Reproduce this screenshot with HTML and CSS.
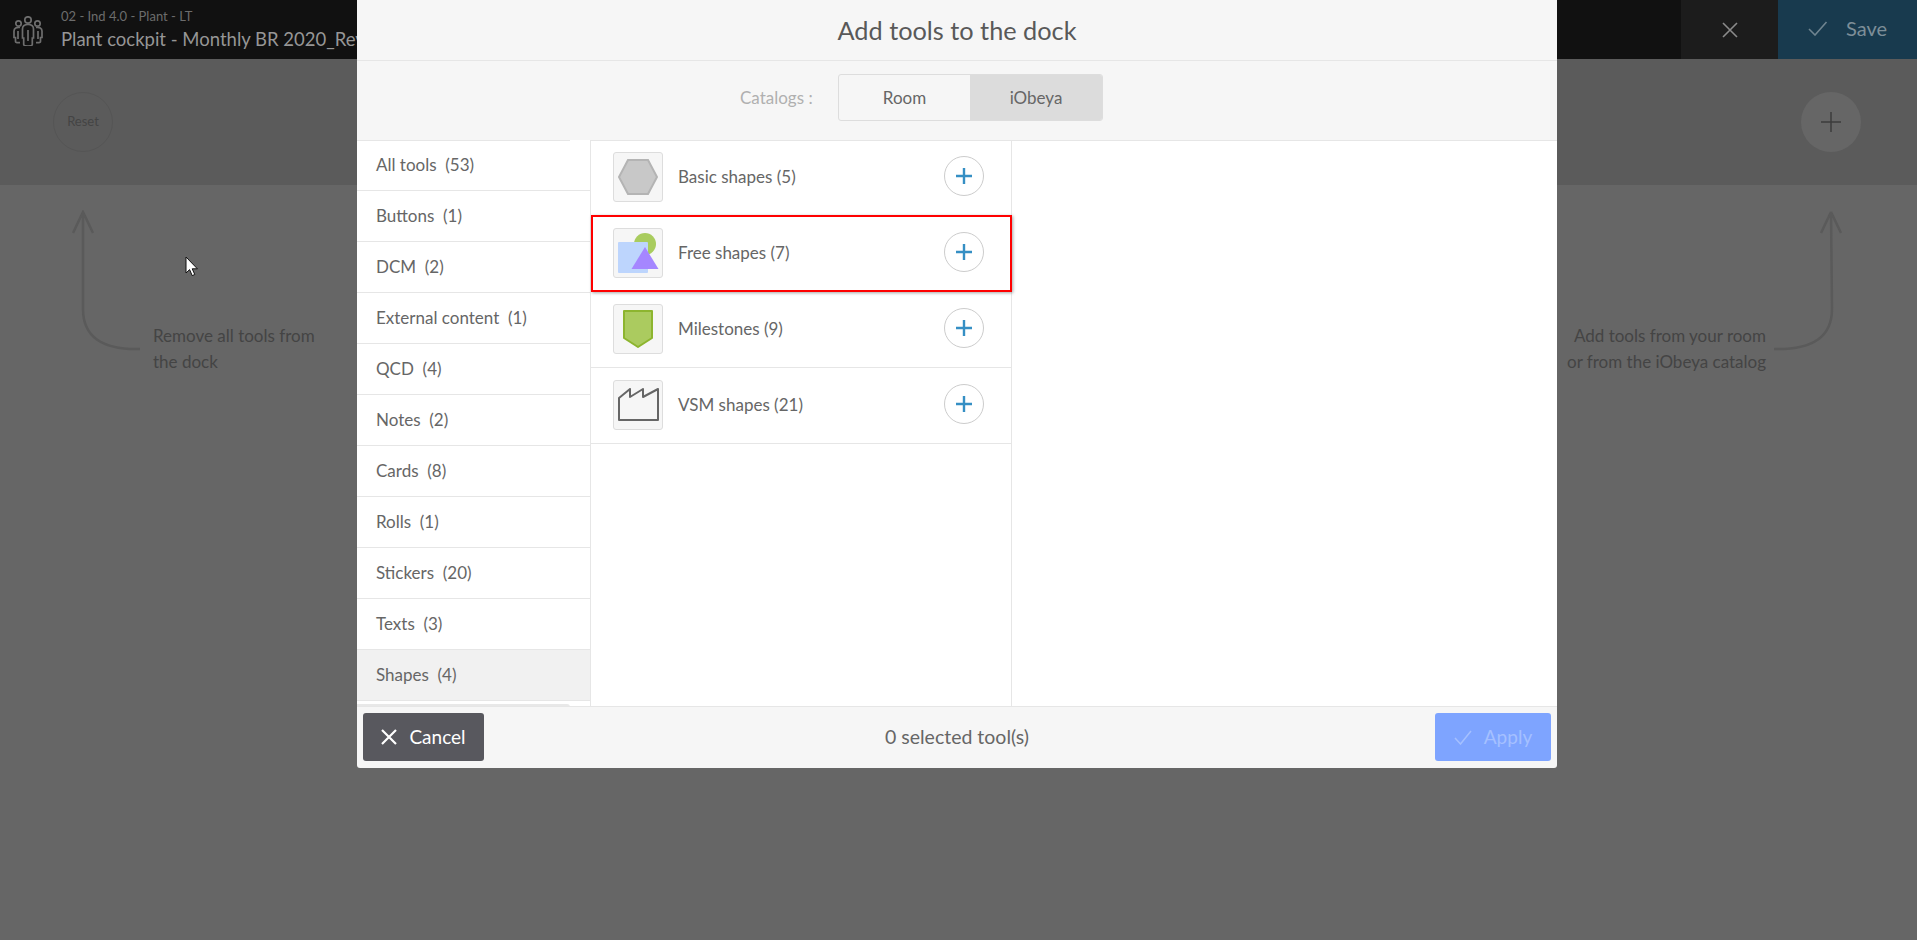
FILE: index.html
```html
<!DOCTYPE html>
<html lang="en">
<head>
<meta charset="utf-8">
<title>Add tools to the dock</title>
<link rel="stylesheet" href="styles.css">
</head>
<body>
<header class="topbar">
  <svg class="room-icon" viewBox="0 0 30 30" fill="none" stroke="#6e6e6e" stroke-width="1.700">
    <circle cx="15" cy="4" r="3.200"/><circle cx="5.500" cy="7.500" r="2.700"/><circle cx="24.500" cy="7.500" r="2.700"/>
    <path d="M9.500 13c0-3 2-4.500 5.500-4.500s5.500 1.500 5.500 4.500v9h-1.200v6.500c0 1-1 1.500-4.300 1.500s-4.300-.5-4.300-1.500V22H9.500z"/>
    <path d="M7 11.500c-3.500-.5-6 .5-6 3.500v6.500h1.500v4c0 .8 1 1.200 3 1.200h1.500"/>
    <path d="M23 11.500c3.500-.5 6 .5 6 3.500v6.500h-1.500v4c0 .8-1 1.200-3 1.200H23"/>
    <path d="M15 14v11M5 15v8M25 15v8"/>
  </svg>
  <div class="room-text">
    <div class="room-path">02 - Ind 4.0 - Plant - LT</div>
    <div class="room-title">Plant cockpit - Monthly BR 2020_Review</div>
  </div>
  <button class="top-close"><svg width="16" height="16" viewBox="0 0 16 16" stroke="#8a8a8a" stroke-width="1.600" fill="none"><path d="M1 1l14 14M15 1L1 15"/></svg></button>
  <button class="top-save"><svg width="20" height="15" viewBox="0 0 20 15" stroke="#6f8490" stroke-width="1.600" fill="none"><path d="M1 8l6 6L18.500 1"/></svg><span>Save</span></button>
</header>

<section class="dock">
  <div class="reset">Reset</div>
  <div class="add-circle"><svg width="20" height="20" viewBox="0 0 20 20" stroke="#3c3c3c" stroke-width="1.500" fill="none"><path d="M10 0v20M0 10h20"/></svg></div>
</section>

<section class="hints">
  <div class="hint hint-left">
    <svg class="arrow" width="68" height="142" viewBox="0 0 68 142" fill="none" stroke="#5a5a5a" stroke-width="2.500"><path d="M1 23L11 2l10 21M11 2v97c0 27 18 41 57 40"/></svg>
    <p class="hint-text">Remove all tools from<br>the dock</p>
  </div>
  <div class="hint hint-right">
    <p class="hint-text align-right">Add tools from your room<br>or from the iObeya catalog</p>
    <svg class="arrow" width="68" height="142" viewBox="0 0 68 142" fill="none" stroke="#5a5a5a" stroke-width="2.500"><path d="M47 23L57 2l1 97c0 27-18 41-58 40M57 2l10 21"/></svg>
  </div>
</section>

<svg class="cursor" width="14" height="20" viewBox="0 0 14 20"><path d="M1 1v16l3.600-3.400 2.600 6 2.600-1.100-2.600-5.700h5.200z" fill="#fff" stroke="#111" stroke-width="1"/></svg>

<div class="modal">
  <h1 class="modal-title">Add tools to the dock</h1>
  <div class="catalog-bar">
    <span class="catalog-label">Catalogs :</span>
    <div class="toggle">
      <span class="toggle-item">Room</span>
      <span class="toggle-item on">iObeya</span>
    </div>
  </div>
  <div class="modal-body">
    <nav class="sidebar">
      <div class="cat">All tools&nbsp; (53)</div>
      <div class="cat">Buttons&nbsp; (1)</div>
      <div class="cat">DCM&nbsp; (2)</div>
      <div class="cat">External content&nbsp; (1)</div>
      <div class="cat">QCD&nbsp; (4)</div>
      <div class="cat">Notes&nbsp; (2)</div>
      <div class="cat">Cards&nbsp; (8)</div>
      <div class="cat">Rolls&nbsp; (1)</div>
      <div class="cat">Stickers&nbsp; (20)</div>
      <div class="cat">Texts&nbsp; (3)</div>
      <div class="cat active">Shapes&nbsp; (4)</div>
      <div class="scroll-edge"></div>
    </nav>
    <div class="tools">
      <div class="tool">
        <span class="tool-icon"><svg width="42" height="38" viewBox="0 0 42 38"><path d="M11 2h20l9 17-9 17H11L2 19z" fill="#c8c8c8" stroke="#b4b4b4" stroke-width="2"/></svg></span>
        <span class="tool-name">Basic shapes (5)</span>
        <span class="plus"><svg width="16" height="16" viewBox="0 0 16 16" stroke="#358fc4" stroke-width="2.400" fill="none"><path d="M8 0v16M0 8h16"/></svg></span>
      </div>
      <div class="tool">
        <span class="tool-icon"><svg width="42" height="42" viewBox="0 0 42 42"><circle cx="28" cy="12" r="11" fill="#a9cc5e"/><rect x="1" y="10" width="30" height="31" rx="1" fill="#bdd5fd"/><path d="M28 15l13.500 22h-27z" fill="#a586ff"/></svg></span>
        <span class="tool-name">Free shapes (7)</span>
        <span class="plus"><svg width="16" height="16" viewBox="0 0 16 16" stroke="#358fc4" stroke-width="2.400" fill="none"><path d="M8 0v16M0 8h16"/></svg></span>
      </div>
      <div class="tool">
        <span class="tool-icon"><svg width="32" height="40" viewBox="0 0 32 40"><path d="M2 2h28v27L16 38 2 29z" fill="#abcb5f" stroke="#8db52f" stroke-width="2" stroke-linejoin="round"/></svg></span>
        <span class="tool-name">Milestones (9)</span>
        <span class="plus"><svg width="16" height="16" viewBox="0 0 16 16" stroke="#358fc4" stroke-width="2.400" fill="none"><path d="M8 0v16M0 8h16"/></svg></span>
      </div>
      <div class="tool">
        <span class="tool-icon"><svg width="42" height="34" viewBox="0 0 42 34"><path d="M2 32V10L13 1v8L26 1v8L41 1v31z" fill="none" stroke="#666" stroke-width="2" stroke-linejoin="round"/></svg></span>
        <span class="tool-name">VSM shapes (21)</span>
        <span class="plus"><svg width="16" height="16" viewBox="0 0 16 16" stroke="#358fc4" stroke-width="2.400" fill="none"><path d="M8 0v16M0 8h16"/></svg></span>
      </div>
    </div>
    <div class="details"></div>
  </div>
  <footer class="modal-footer">
    <button class="btn btn-cancel"><svg width="16" height="16" viewBox="0 0 16 16" stroke="#fff" stroke-width="2.200" fill="none"><path d="M1 1l14 14M15 1L1 15"/></svg><span class="btn-label">Cancel</span></button>
    <span class="selected">0 selected tool(s)</span>
    <button class="btn btn-apply"><svg width="18" height="15" viewBox="0 0 18 15" stroke="#a5c0ff" stroke-width="1.500" fill="none"><path d="M1 8l5.500 6L17 1"/></svg><span class="btn-label">Apply</span></button>
  </footer>
  <div class="highlight"></div>
</div>
</body>
</html>
```
FILE: styles.css
```css
* { box-sizing: border-box; }
html, body { height: 100%; }
body {
  margin: 0;
  background: #666;
  font-family: "Lato", "Noto Sans", sans-serif;
  color: #444;
  overflow: hidden;
  position: relative;
}
button { font: inherit; border: 0; padding: 0; }

.topbar {
  height: 59px;
  background: #111;
  display: flex;
  align-items: stretch;
}
.room-icon { width: 30px; height: 30px; margin: 16px 18px 0 13px; flex: none; }
.room-text { flex: 1; padding-top: 8px; }
.room-path { font-size: 13px; line-height: 17px; color: #6c6c6c; }
.room-title { font-size: 18.500px; line-height: 24px; margin-top: 2px; color: #969696; }
.top-close {
  width: 97px; background: #1c1c1c;
  display: flex; align-items: center; justify-content: center;
}
.top-save {
  width: 139px; background: #183a4e; color: #7d8e98;
  display: flex; align-items: center; justify-content: center; gap: 18px;
  font-size: 20px;
  padding-bottom: 3px;
}

.dock {
  height: 126px;
  background: #5b5b5b;
  display: flex;
  justify-content: space-between;
  align-items: center;
  padding: 0 56px 0 53px;
}
.reset {
  width: 60px; height: 60px; border-radius: 50%;
  border: 1px solid #555;
  display: flex; align-items: center; justify-content: center;
  font-size: 13px; color: #444;
  padding-bottom: 2px;
}
.add-circle {
  width: 60px; height: 60px; border-radius: 50%;
  background: #666;
  display: flex; align-items: center; justify-content: center;
}

.hints {
  display: flex;
  justify-content: space-between;
  padding: 25px 75px 0 72px;
}
.hint { display: flex; align-items: flex-end; }
.arrow { display: block; flex: none; }
.hint-left .arrow { margin-right: 13px; }
.hint-right .arrow { margin-left: 8px; }
.hint-text { margin: 0 0 -23px; font-size: 17px; line-height: 26px; color: #444; }
.align-right { text-align: right; }

.cursor { position: absolute; left: 185px; top: 256px; }

.modal {
  position: absolute;
  left: 357px; top: 0;
  width: 1200px; height: 768px;
  background: #f6f6f6;
  border-radius: 0 0 3px 3px;
  display: flex;
  flex-direction: column;
  color: #666;
}
.modal-title {
  margin: 0;
  height: 61px;
  border-bottom: 1px solid #e6e6e6;
  font-size: 25.300px;
  font-weight: 400;
  line-height: 60px;
  text-align: center;
  color: #595959;
}
.catalog-bar {
  height: 80px;
  border-bottom: 1px solid #e6e6e6;
  display: flex;
  align-items: flex-start;
  padding: 13px 0 0 383px;
}
.catalog-label { width: 98px; font-size: 17px; line-height: 48px; color: #b0b0b0; }
.toggle {
  display: flex;
  width: 265px; height: 47px;
  border: 1px solid #ddd;
  border-radius: 3px;
  overflow: hidden;
}
.toggle-item {
  flex: 1;
  display: flex; align-items: center; justify-content: center;
  font-size: 17px; color: #666;
}
.toggle-item.on { background: #dcdcdc; flex: none; width: 132px; }

.modal-body {
  flex: 1;
  min-height: 0;
  display: flex;
  background: #fff;
}
.sidebar {
  width: 234px;
  margin-top: -1px;
  background: #fff;
  border-right: 1px solid #e6e6e6;
  overflow: hidden;
}
.sidebar::before {
  content: "";
  display: block;
  height: 1px;
  background: linear-gradient(to right, #e6e6e6 213px, #fff 213px);
}
.cat {
  height: 51px;
  padding: 0 0 2px 19px;
  border-bottom: 1px solid #e6e6e6;
  display: flex; align-items: center;
  font-size: 17px;
  color: #666;
}
.cat:first-of-type { height: 50px; }
.cat.active { background: #f1f1f1; }
.scroll-edge {
  width: 213px; height: 3px; margin-top: 3px;
  background: #e8e8e8;
  border-radius: 0 4px 0 0;
}

.tools {
  width: 421px;
  border-right: 1px solid #e6e6e6;
}
.tool {
  height: 76px;
  border-bottom: 1px solid #e6e6e6;
  display: flex; align-items: center;
  padding: 0 27px 1px 22px;
}
.tool:first-child { height: 75px; padding-bottom: 2px; }
.tool-icon {
  width: 50px; height: 50px;
  flex: none;
  background: #f6f6f6;
  border: 1px solid #ddd;
  border-radius: 3px;
  display: flex; align-items: center; justify-content: center;
}
.tool-name { flex: 1; margin: 0 0 2px 15px; font-size: 17px; color: #666; }
.plus {
  width: 40px; height: 40px; border-radius: 50%;
  border: 1px solid #ccc;
  background: #fff;
  margin-bottom: 2px;
  display: flex; align-items: center; justify-content: center;
}
.details { flex: 1; }

.modal-footer {
  height: 62px;
  flex: none;
  border-top: 1px solid #e6e6e6;
  display: flex; align-items: center; justify-content: space-between;
  padding: 0 6px 1px;
  border-radius: 0 0 3px 3px;
}
.selected { font-size: 19.500px; color: #666; margin: 0 5px 2px 0; }
.btn {
  height: 48px;
  border-radius: 3px;
  display: flex; align-items: center; justify-content: center;
  gap: 12px;
  font-size: 19px;
}
.btn-label { margin-bottom: 2px; }
.btn-cancel { width: 121px; background: #58585e; color: #fff; }
.btn-apply { width: 116px; background: #7ea4ff; color: #a5c0ff; }

.highlight {
  position: absolute;
  left: 234px; top: 215px;
  width: 421px; height: 77px;
  border: 2px solid #f00;
  box-shadow: 1px 1px 3px rgba(0,0,0,.35);
}
```
